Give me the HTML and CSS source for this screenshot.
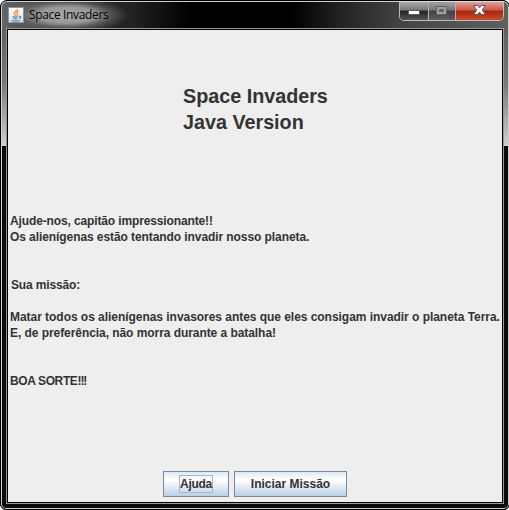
FILE: index.html
```
<!DOCTYPE html>
<html lang="pt">
<head>
<meta charset="utf-8">
<title>Space Invaders</title>
<link rel="stylesheet" href="styles.css">
</head>
<body>
<div class="window">
  <header class="titlebar">
    <svg class="app-icon" width="16" height="16" viewBox="0 0 16 16">
      <defs><linearGradient id="tile" x2="0" y2="1"><stop stop-color="#fff"/><stop offset="1" stop-color="#d3e0ea"/></linearGradient></defs>
      <rect x=".5" y=".5" width="15" height="15" fill="url(#tile)" stroke="#8294a5"/>
      <path d="M9 2c1 2-3.500 2.800-2.800 4.800L8 8.600M10.800 4.400C8.600 5 8.600 6 9.300 7c.3.6 0 1.200-.6 1.700" fill="none" stroke="#ed8224" stroke-width="1.200"/>
      <path d="M4.500 9.500c1.600.6 4.300.6 5.500 0M5.300 11.500c1.300.5 3 .5 4.200 0M11 9.300c2.400-.4 2 1.800.2 2.200M3.500 13.500c2.500.7 6 .7 8.500 0" fill="none" stroke="#507da3" stroke-width="1.200"/>
    </svg>
    <span class="caption">Space Invaders</span>
    <div class="controls">
      <div class="control minimize"><svg width="28" height="18"><rect x="8.500" y="8.500" width="11" height="4" rx=".5" fill="#fff" stroke="#555a68"/></svg></div>
      <div class="control maximize"><svg width="26" height="18"><path d="M7.500 4.500h10v8h-10zM10.500 7.500h4v2h-4z" fill="#a0a0a0" fill-rule="evenodd" stroke="#626262"/></svg></div>
      <div class="control close"><svg width="47" height="18"><path d="M17.500 3.500h4l2 2.300 2-2.300h4L26.200 8l3.300 4.500h-4l-2-2.300-2 2.300h-4L20.800 8z" fill="#fff" stroke="#535666"/></svg></div>
    </div>
  </header>
  <main class="content">
    <h1 class="title">Space Invaders<br>Java Version</h1>
    <div class="story">
      <p><span class="l1">Ajude-nos, capitão impressionante!!</span><br><span class="l2">Os alienígenas estão tentando invadir nosso planeta.</span></p>
      <p class="mission"><span class="l3">Sua missão:</span></p>
      <p class="goal"><span class="l4">Matar todos os alienígenas invasores antes que eles consigam invadir o planeta Terra.</span><br><span class="l5">E, de preferência, não morra durante a batalha!</span></p>
      <p class="luck"><span class="l6">BOA SORTE<span class="marks">!!!</span></span></p>
    </div>
    <div class="actions">
      <button class="button help"><span class="focus">Ajuda</span></button>
      <button class="button start">Iniciar Missão</button>
    </div>
  </main>
</div>
</body>
</html>
```
FILE: styles.css
```
* { box-sizing: border-box; }
html { overflow: hidden; }
body { margin: 0; background: #fff; overflow: hidden; width: 509px; height: 510px; font-family: "Liberation Sans", Arial, sans-serif; }
.window {
  width: 510px; height: 510px; padding: 0 6px 5px 5px;
  border: 1px solid #000; border-radius: 7px 7px 6px 6px;
  box-shadow: inset 0 0 0 1px #d0d0d0;
  background:
    radial-gradient(ellipse 62px 18px at 66px 14px, #a8a8a8 0, #989898 45%, rgba(120,120,120,.5) 72%, transparent 100%) no-repeat,
    linear-gradient(90deg, #666 0, #303030 60px, #222 130px, #000 190px, #000 290px, #222 340px, #444 400px, #606060 100%) 0 0 / 100% 28px no-repeat,
    linear-gradient(#606060, #777 45%, #d0d0d0) 0 28px / 100% 117px no-repeat,
    #0c0c0c;
}
.titlebar { height: 27px; display: flex; align-items: flex-start; padding-left: 2px; }
.app-icon { margin-top: 6px; flex: none; }
.caption { margin: 6px 0 0 5px; font: 12px/16px "Open Sans", "Noto Sans", sans-serif; letter-spacing: -0.35px; color: #000; white-space: nowrap; }
.controls { display: flex; margin-left: auto; margin-right: -1px; height: 20px; border: 1px solid #bcbcbc; border-top-color: #ddd; border-radius: 0 0 5px 5px; overflow: hidden; }
.control { height: 18px; border-right: 1px solid #b0b0b0; }
.control svg { display: block; }
.minimize { width: 29px; background: linear-gradient(#aaa, #777 45%, #222 50%, #555); }
.maximize { width: 27px; background: linear-gradient(#a0a0a0, #777 45%, #404040 50%, #606060); }
.close { width: 47px; border: 0; background: linear-gradient(#e0a095, #c85b48 45%, #ac2309 50%, #c94c30); }
.content {
  height: 474px; border: 1px solid #000; outline: 1px solid #999; margin: 1px 0 0 1px;
  background: #eee; color: #333; display: flex; flex-direction: column;
}
.title { margin: 53px 0 0 175px; font-size: 21px; line-height: 26px; white-space: nowrap; transform: scaleX(.94); transform-origin: left; }
.story { margin: 78px 0 0 2px; font-size: 12px; line-height: 16px; font-weight: bold; white-space: nowrap; }
.story p { margin: 0; }
.l1 { letter-spacing: -0.13px; }
.l2 { letter-spacing: -0.08px; }
.l3 { letter-spacing: -0.15px; }
.l4 { letter-spacing: -0.04px; }
.l5 { letter-spacing: -0.06px; }
.l6 { letter-spacing: -0.38px; }
.marks { letter-spacing: -1.1px; }
.story .mission { margin: 32px 0 0 1px; }
.story .goal { margin-top: 16px; }
.story .luck { margin-top: 32px; }
.actions { display: flex; gap: 5px; margin: auto 0 5px 155px; }
.button {
  height: 26px; padding: 0; border: 1px solid #7a8a99; color: #333;
  font: bold 12px "Liberation Sans", Arial, sans-serif; white-space: nowrap;
  background: linear-gradient(#dde8f3, #fff 30%, #fff 35%, #b8cfe5);
  display: flex; align-items: center; justify-content: center;
}
.help { width: 66px; }
.start { width: 113px; }
.focus { border: 1px solid #a3b8cc; width: 34px; height: 18px; line-height: 17px; letter-spacing: -0.3px; }
```
